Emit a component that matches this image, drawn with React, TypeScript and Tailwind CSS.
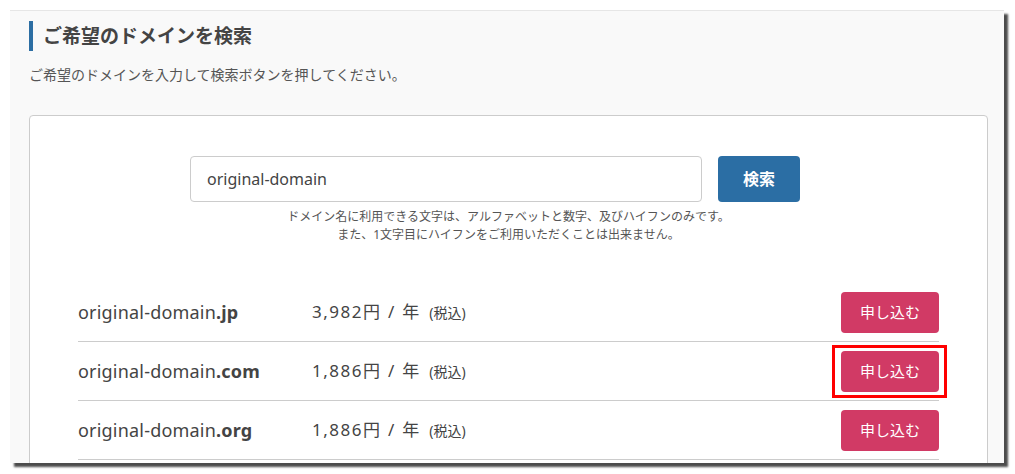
import React from "react";

const domains = [
  { name: "original-domain", tld: ".jp", price: "3,982", highlight: false },
  { name: "original-domain", tld: ".com", price: "1,886", highlight: true },
  { name: "original-domain", tld: ".org", price: "1,886", highlight: false },
];

const font = { fontFamily: '"Noto Sans", "Noto Sans CJK JP", sans-serif' };

const DomainRow = ({ d }: { d: (typeof domains)[number] }) => {
  return (
    <div className="flex items-center h-[59px] border-b border-[#cccccc]">
      <div className="w-[234px] text-[18px] text-[#444] tracking-[0.2px]">
        {d.name}
        <span className="font-bold">{d.tld}</span>
      </div>
      <div className="flex-1 flex items-center text-[17px] text-[#444]">
        <span className="tracking-[1.5px]">{d.price}</span>
        <span>円</span>
        <span className="mx-[8px]">/</span>
        <span>年</span>
        <span className="ml-[10px] text-[14px]">(税込)</span>
      </div>
      <div className="relative">
        {d.highlight ? (
          <div className="absolute left-[-9px] right-[-8px] top-[-6px] bottom-[-6px] border-[3px] border-[#ff0000]" />
        ) : null}
        <button className="relative w-[98px] h-[41px] rounded-[4px] bg-[#d13a65] text-white text-[15px]">
          申し込む
        </button>
      </div>
    </div>
  );
};

export default function App() {
  return (
    <div className="w-[1015px] h-[474px] bg-white pt-[10px] pl-[10px] overflow-hidden" style={font}>
      <div className="w-[994px] h-[453px] bg-[#f9f9f9] border-t border-[#e6e6e6] overflow-hidden shadow-[4px_4px_2px_rgba(0,0,0,0.7)] pl-[19px] pt-[10px]">
        <h2 className="border-l-[4px] border-[#2c6ea3] h-[30px] pl-[10px] flex items-center text-[19px] font-bold text-[#444]">
          ご希望のドメインを検索
        </h2>
        <p className="mt-[13px] text-[14px] text-[#555]">
          ご希望のドメインを入力して検索ボタンを押してください。
        </p>
        <div className="mt-[30px] w-[959px] bg-white border border-[#cccccc] rounded-[4px] pt-[40px] pb-[40px]">
          <div className="flex gap-[16px] pl-[160px]">
            <input
              readOnly
              value="original-domain"
              className="w-[512px] h-[46px] border border-[#cccccc] rounded-[4px] px-[16px] text-[16px] text-[#444] outline-none"
              style={font}
            />
            <button className="w-[82px] h-[46px] rounded-[4px] bg-[#2b6ea4] text-white text-[16px] font-bold">
              検索
            </button>
          </div>
          <div className="mt-[6px] text-center text-[12px] leading-[18px] text-[#555]">
            <p>ドメイン名に利用できる文字は、アルファベットと数字、及びハイフンのみです。</p>
            <p>また、1文字目にハイフンをご利用いただくことは出来ません。</p>
          </div>
          <div className="mt-[39px] px-[48px]">
            {domains.map((d) => (
              <DomainRow key={d.tld} d={d} />
            ))}
          </div>
        </div>
      </div>
    </div>
  );
}
